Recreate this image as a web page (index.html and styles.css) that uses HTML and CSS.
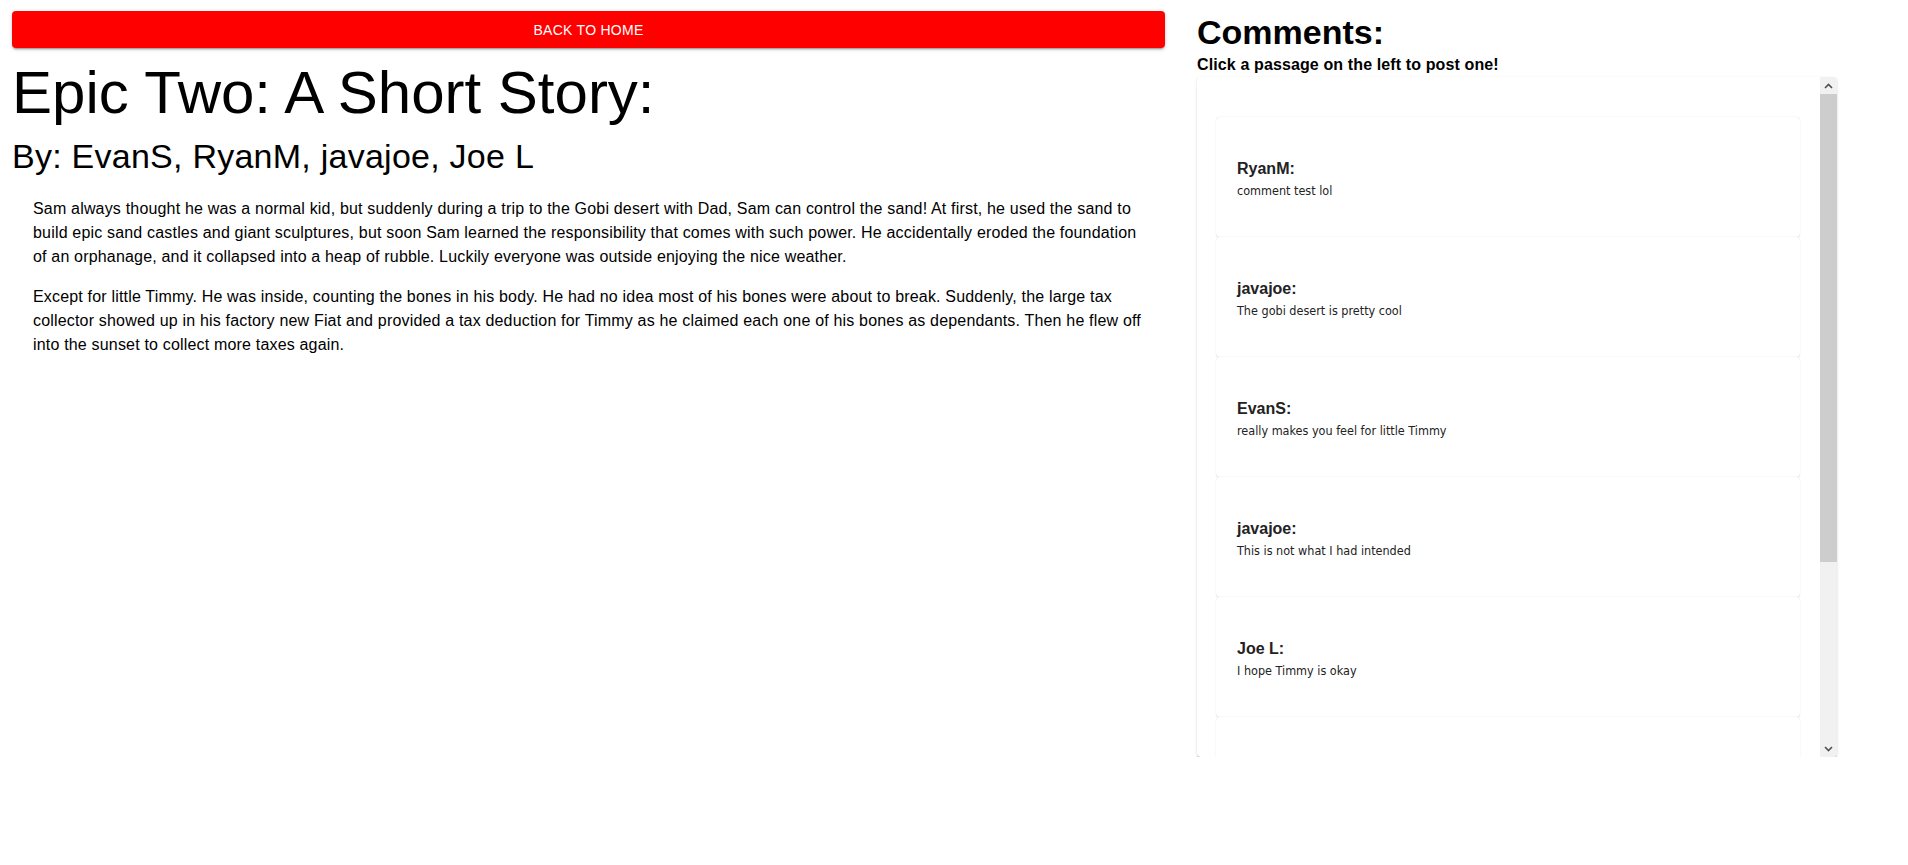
FILE: index.html
```html
<!DOCTYPE html>
<html lang="en">
<head>
<meta charset="utf-8">
<title>Epic Two: A Short Story</title>
<link rel="stylesheet" href="styles.css">
</head>
<body>
<div class="page">
  <main class="story">
    <button class="home-btn" type="button">Back to Home</button>
    <h1 class="story-title">Epic Two: A Short Story:</h1>
    <h2 class="story-authors">By: EvanS, RyanM, javajoe, Joe L</h2>
    <div class="story-body">
      <p class="passage">Sam always thought he was a normal kid, but suddenly during a trip to the Gobi desert with Dad, Sam can control the sand! At first, he used the sand to build epic sand castles and giant sculptures, but soon Sam learned the responsibility that comes with such power. He accidentally eroded the foundation of an orphanage, and it collapsed into a heap of rubble. Luckily everyone was outside enjoying the nice weather.</p>
      <p class="passage">Except for little Timmy. He was inside, counting the bones in his body. He had no idea most of his bones were about to break. Suddenly, the large tax collector showed up in his factory new Fiat and provided a tax deduction for Timmy as he claimed each one of his bones as dependants. Then he flew off into the sunset to collect more taxes again.</p>
    </div>
  </main>
  <aside class="comments">
    <h2 class="comments-title">Comments:</h2>
    <p class="comments-hint">Click a passage on the left to post one!</p>
    <div class="comments-box">
      <div class="comment-list">
        <div class="comment-card">
          <div class="comment-author">RyanM:</div>
          <div class="comment-text">comment test lol</div>
        </div>
        <div class="comment-card">
          <div class="comment-author">javajoe:</div>
          <div class="comment-text">The gobi desert is pretty cool</div>
        </div>
        <div class="comment-card">
          <div class="comment-author">EvanS:</div>
          <div class="comment-text">really makes you feel for little Timmy</div>
        </div>
        <div class="comment-card">
          <div class="comment-author">javajoe:</div>
          <div class="comment-text">This is not what I had intended</div>
        </div>
        <div class="comment-card">
          <div class="comment-author">Joe L:</div>
          <div class="comment-text">I hope Timmy is okay</div>
        </div>
        <div class="comment-card" aria-hidden="true"></div>
      </div>
      <div class="scrollbar" aria-hidden="true">
        <div class="sb-btn">
          <svg width="9" height="6" viewBox="0 0 9 6"><path d="M1 5 L4.5 1.5 L8 5" fill="none" stroke="#505050" stroke-width="1.6"/></svg>
        </div>
        <div class="sb-track"><div class="sb-thumb"></div></div>
        <div class="sb-btn">
          <svg width="9" height="6" viewBox="0 0 9 6"><path d="M1 1 L4.5 4.5 L8 1" fill="none" stroke="#505050" stroke-width="1.6"/></svg>
        </div>
      </div>
    </div>
  </aside>
</div>
</body>
</html>
```

FILE: styles.css
```css
html, body {
  margin: 0;
  padding: 0;
  background: #ffffff;
}

body {
  font-family: "Liberation Sans", Arial, sans-serif;
  color: #000;
}

.page {
  display: flex;
  align-items: flex-start;
  gap: 32px;
  padding: 11px 0 0 12px;
}

.story {
  width: 1153px;
  display: flex;
  flex-direction: column;
}

.home-btn {
  height: 37px;
  width: 100%;
  border: none;
  border-radius: 4px;
  background: #ff0000;
  color: #ffffff;
  font-family: "Liberation Sans", Arial, sans-serif;
  font-size: 14px;
  letter-spacing: 0.02em;
  text-transform: uppercase;
  box-shadow: 0 3px 1px -2px rgba(0,0,0,0.2), 0 2px 2px 0 rgba(0,0,0,0.14), 0 1px 5px 0 rgba(0,0,0,0.12);
  cursor: pointer;
}

.story-title {
  margin: 9px 0 0 0;
  font-size: 60px;
  line-height: 72px;
  font-weight: 400;
  letter-spacing: 0;
}

.story-authors {
  margin: 6px 0 0 0;
  font-size: 34px;
  line-height: 42px;
  font-weight: 400;
  letter-spacing: 0.25px;
}

.story-body {
  padding: 20px 20px 0 21px;
  display: flex;
  flex-direction: column;
  gap: 16px;
}

.passage {
  margin: 0;
  font-size: 16px;
  line-height: 24px;
  letter-spacing: 0.18px;
  cursor: pointer;
}

.comments {
  width: 640px;
  display: flex;
  flex-direction: column;
}

.comments-title {
  margin: 0;
  font-size: 34px;
  line-height: 42px;
  font-weight: 700;
}

.comments-hint {
  margin: 0;
  font-size: 16px;
  line-height: 24px;
  font-weight: 700;
  letter-spacing: 0.12px;
}

.comments-box {
  height: 680px;
  display: flex;
  overflow: hidden;
  background: #fff;
  border-radius: 4px;
  box-shadow: 0 2px 1px -1px rgba(0,0,0,0.2), 0 1px 1px 0 rgba(0,0,0,0.14), 0 1px 3px 0 rgba(0,0,0,0.12);
}

.comment-list {
  flex: 1;
  min-width: 0;
  overflow: hidden;
  display: flex;
  flex-direction: column;
  padding: 40px 20px 0 19px;
}

.comment-card {
  flex: 0 0 120px;
  box-sizing: border-box;
  padding: 40px 20px 0 21px;
  border-radius: 4px;
  background: #fff;
  box-shadow: 0 0 1px rgba(0,0,0,0.2), 0 1px 1px rgba(0,0,0,0.05);
}

.comment-author {
  font-size: 16px;
  line-height: 24px;
  font-weight: 700;
  color: #222;
}

.comment-text {
  font-family: "DejaVu Sans Condensed", "DejaVu Sans", sans-serif;
  font-size: 12.5px;
  line-height: 20px;
  color: #222;
}

.scrollbar {
  flex: 0 0 17px;
  display: flex;
  flex-direction: column;
  background: #f1f1f1;
}

.sb-btn {
  flex: 0 0 17px;
  display: flex;
  align-items: center;
  justify-content: center;
}

.sb-track {
  flex: 1;
  display: flex;
  flex-direction: column;
}

.sb-thumb {
  height: 468px;
  background: #cdcdcd;
}
```
